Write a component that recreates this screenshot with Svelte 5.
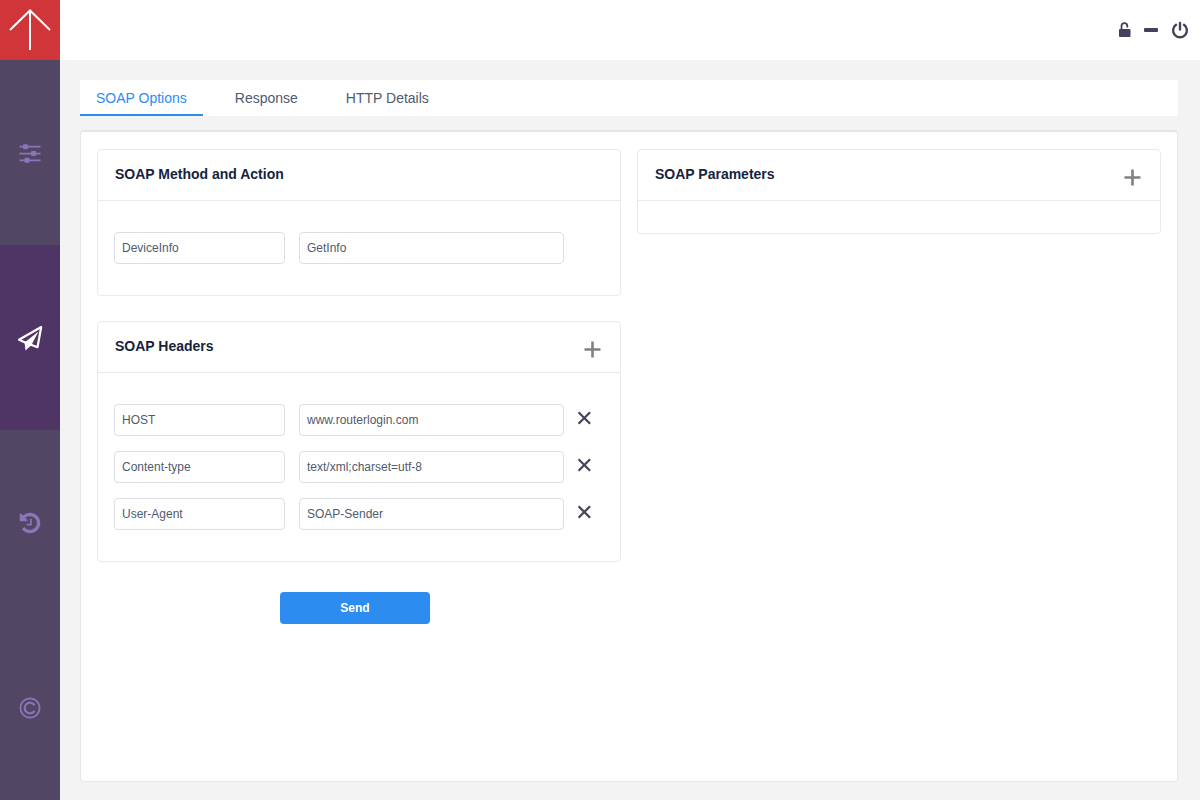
<script lang="ts">
  const nav = ['Settings', 'Send request', 'History', 'About'];
  const tabs = ['SOAP Options', 'Response', 'HTTP Details'];

  let activeNav = $state('Send request');
  let activeTab = $state('SOAP Options');
  let method = $state('DeviceInfo');
  let action = $state('GetInfo');
  let headers = $state([
    { id: 1, name: 'HOST', value: 'www.routerlogin.com' },
    { id: 2, name: 'Content-type', value: 'text/xml;charset=utf-8' },
    { id: 3, name: 'User-Agent', value: 'SOAP-Sender' },
  ]);
  let params = $state<{ id: number; name: string; value: string }[]>([]);
  let nextId = 4;

  function addHeader() {
    headers.push({ id: nextId++, name: '', value: '' });
  }

  function removeHeader(id: number) {
    headers = headers.filter((h) => h.id !== id);
  }

  function addParam() {
    params.push({ id: nextId++, name: '', value: '' });
  }

  function removeParam(id: number) {
    params = params.filter((p) => p.id !== id);
  }
</script>

{#snippet plus()}
  <svg width="18" height="18" viewBox="0 0 18 18" fill="none" stroke="currentColor" stroke-width="2.6">
    <path d="M9.500 1.500v16M1.500 9.500h16" />
  </svg>
{/snippet}

{#snippet cross()}
  <svg width="14" height="14" viewBox="0 0 14 14" fill="none" stroke="currentColor" stroke-width="2.3">
    <path d="M.5 1.200l11.600 11.600M12.100 1.200L.5 12.800" />
  </svg>
{/snippet}

<div class="app">
  <aside>
    <div class="logo">
      <svg width="60" height="60" viewBox="0 0 60 60" fill="none" stroke="#fff" stroke-width="2">
        <path d="M30 50V10.500M10 30L30 10.500L50 30" />
      </svg>
    </div>
    <nav>
      {#each nav as item (item)}
        <button class:active={activeNav === item} aria-label={item} onclick={() => (activeNav = item)}>
          {#if item === 'Settings'}
            <svg width="22" height="22" viewBox="0 0 22 22" fill="currentColor">
              <path d="M.5 3.800h21v1.700H.5zM.5 10.700h21v1.700H.5zM.5 17.500h21v1.700H.5z" />
              <rect x="4" y="2.200" width="5" height="5" rx="1" />
              <rect x="12" y="9.100" width="5" height="5" rx="1" />
              <rect x="5.500" y="15.800" width="5" height="5" rx="1" />
            </svg>
          {:else if item === 'Send request'}
            <svg width="26" height="26" viewBox="0 0 26 26">
              <path
                d="M24.200 2L2 14.800L8.200 17.500L20.500 22.200z"
                fill="none"
                stroke="currentColor"
                stroke-width="2.200"
                stroke-linejoin="round"
              />
              <path d="M21.500 6.500L14.300 20.300L8.500 25.500L7.500 17.500z" fill="currentColor" />
            </svg>
          {:else if item === 'History'}
            <svg width="24" height="24" viewBox="0 0 1792 1792" fill="currentColor">
              <path
                d="M1664 896q0 156-61 298t-164 245-245 164-298 61q-172 0-327-72.500t-264-204.500q-7-10-6.500-22.500t8.500-20.500l137-138q10-9 25-9 16 2 23 12 73 95 179 147t225 52q104 0 198.500-40.500t163.500-109.500 109.500-163.500 40.500-198.500-40.500-198.500-109.500-163.500-163.500-109.500-198.500-40.500q-98 0-188 35.500t-160 101.500l137 138q31 30 14 69-17 40-59 40h-448q-26 0-45-19t-19-45v-448q0-42 40-59 39-17 69 14l130 129q107-101 244.500-156.500t284.500-55.500q156 0 298 61t245 164 164 245 61 298zm-640-288v448q0 14-9 23t-23 9h-320q-14 0-23-9t-9-23v-64q0-14 9-23t23-9h224v-352q0-14 9-23t23-9h64q14 0 23 9t9 23z"
              />
            </svg>
          {:else}
            <svg width="22" height="22" viewBox="0 0 22 22" fill="none" stroke="currentColor">
              <circle cx="11" cy="11" r="9.600" stroke-width="1.800" />
              <path d="M15.500 8.200A5.300 5.300 0 1 0 15.500 13.800" stroke-width="2.200" />
            </svg>
          {/if}
        </button>
      {/each}
    </nav>
  </aside>

  <div class="main">
    <header>
      <button class="icon" aria-label="Unlock">
        <svg width="14" height="18" viewBox="0 0 14 18">
          <path d="M4.500 9V5a2.900 2.900 0 0 1 5.800 0V6.500" fill="none" stroke="currentColor" stroke-width="1.800" />
          <rect x="2" y="8" width="11.500" height="8" rx="1" fill="currentColor" />
        </svg>
      </button>
      <button class="icon" aria-label="Minimize">
        <svg width="14" height="18" viewBox="0 0 14 18">
          <rect y="7" width="14" height="4" rx="1" fill="currentColor" />
        </svg>
      </button>
      <button class="icon" aria-label="Quit">
        <svg width="18" height="18" viewBox="0 0 18 18" fill="none" stroke="currentColor" stroke-width="2.400" stroke-linecap="round">
          <path d="M5 3.800a6.900 6.900 0 1 0 8 0M9 2v6.500" />
        </svg>
      </button>
    </header>

    <main>
      <div class="tabs" role="tablist">
        {#each tabs as tab (tab)}
          <button role="tab" aria-selected={activeTab === tab} class:active={activeTab === tab} onclick={() => (activeTab = tab)}>
            {tab}
          </button>
        {/each}
      </div>

      <div class="panel">
        <div class="col">
          <section class="card">
            <div class="card-head">
              <h2>SOAP Method and Action</h2>
            </div>
            <div class="card-body">
              <div class="row">
                <input class="name" aria-label="SOAP method" bind:value={method} />
                <input class="value" aria-label="SOAP action" bind:value={action} />
              </div>
            </div>
          </section>

          <section class="card">
            <div class="card-head">
              <h2>SOAP Headers</h2>
              <button class="add" aria-label="Add header" onclick={addHeader}>{@render plus()}</button>
            </div>
            <div class="card-body">
              {#each headers as header (header.id)}
                <div class="row">
                  <input class="name" aria-label="Header name" bind:value={header.name} />
                  <input class="value" aria-label="Header value" bind:value={header.value} />
                  <button class="remove" aria-label="Remove header" onclick={() => removeHeader(header.id)}>
                    {@render cross()}
                  </button>
                </div>
              {/each}
            </div>
          </section>

          <button class="send">Send</button>
        </div>

        <div class="col">
          <section class="card">
            <div class="card-head">
              <h2>SOAP Parameters</h2>
              <button class="add" aria-label="Add parameter" onclick={addParam}>{@render plus()}</button>
            </div>
            <div class="card-body" class:empty={params.length === 0}>
              {#each params as param (param.id)}
                <div class="row">
                  <input class="name" aria-label="Parameter name" bind:value={param.name} />
                  <input class="value" aria-label="Parameter value" bind:value={param.value} />
                  <button class="remove" aria-label="Remove parameter" onclick={() => removeParam(param.id)}>
                    {@render cross()}
                  </button>
                </div>
              {/each}
            </div>
          </section>
        </div>
      </div>
    </main>
  </div>
</div>

<style>
  :global(body) {
    margin: 0;
  }
  .app,
  .app * {
    box-sizing: border-box;
  }
  .app {
    display: flex;
    min-height: 100vh;
    background: #f3f3f3;
    color: #515a6e;
    font-family: 'Liberation Sans', Arial, sans-serif;
    font-size: 12px;
  }
  button {
    padding: 0;
    border: 0;
    background: none;
    color: inherit;
    font: inherit;
    cursor: pointer;
  }
  svg {
    display: block;
  }
  aside {
    display: flex;
    flex-direction: column;
    flex: none;
    width: 60px;
    background: #514764;
  }
  .logo {
    height: 60px;
    background: #d03539;
  }
  nav {
    display: flex;
    flex: 1;
    flex-direction: column;
  }
  nav button {
    display: flex;
    flex: 1;
    align-items: center;
    justify-content: center;
    padding-top: 1px;
    color: #8a75b8;
  }
  nav button.active {
    background: #4f3466;
    color: #fff;
  }
  .main {
    display: flex;
    flex: 1;
    flex-direction: column;
    min-width: 0;
  }
  header {
    display: flex;
    align-items: center;
    justify-content: flex-end;
    gap: 13px;
    height: 60px;
    padding-right: 11px;
    background: #fff;
  }
  .icon {
    color: #46405c;
  }
  main {
    display: flex;
    flex: 1;
    flex-direction: column;
    padding: 20px 22px 18px 20px;
  }
  .tabs {
    display: flex;
    gap: 16px;
    margin-bottom: 14px;
    background: #fff;
  }
  .tabs button {
    height: 36px;
    padding: 2px 16px 0;
    border-bottom: 2px solid transparent;
    font-size: 14px;
    line-height: 32px;
  }
  .tabs button.active {
    border-color: #2d8cf0;
    color: #2d8cf0;
  }
  .panel {
    display: flex;
    flex: 1;
    gap: 16px;
    padding: 17px 16px;
    border: 1px solid #e8e8e8;
    border-top: 2px solid #e4e4e4;
    border-radius: 4px;
    background: #fff;
  }
  .col {
    display: flex;
    flex: 1;
    flex-direction: column;
    min-width: 0;
  }
  .card {
    margin-bottom: 25px;
    border: 1px solid #e8eaec;
    border-radius: 4px;
  }
  .card-head {
    display: flex;
    align-items: center;
    justify-content: space-between;
    height: 51px;
    padding: 0 19px 0 17px;
    border-bottom: 1px solid #e8eaec;
  }
  h2 {
    margin: 0;
    padding-bottom: 2px;
    color: #17233d;
    font-size: 14px;
    line-height: 20px;
  }
  .add {
    padding-top: 4px;
    color: #808085;
  }
  .card-body {
    display: flex;
    flex-direction: column;
    gap: 15px;
    padding: 31px 16px;
  }
  .card-body.empty {
    padding: 16px;
  }
  .row {
    display: flex;
    align-items: center;
    gap: 14px;
  }
  input {
    min-width: 0;
    height: 32px;
    padding: 0 7px;
    border: 1px solid #dcdee2;
    border-radius: 4px;
    background: #fff;
    color: #515a6e;
    font: inherit;
  }
  .name {
    flex: 0 1 171px;
  }
  .value {
    flex: 0 1 265px;
  }
  .remove {
    padding-bottom: 4px;
    color: #46465a;
  }
  .send {
    align-self: center;
    width: 150px;
    height: 32px;
    margin: 5px 8px 0 0;
    border-radius: 4px;
    background: #2d8cf0;
    color: #fff;
    font-weight: bold;
  }
</style>
